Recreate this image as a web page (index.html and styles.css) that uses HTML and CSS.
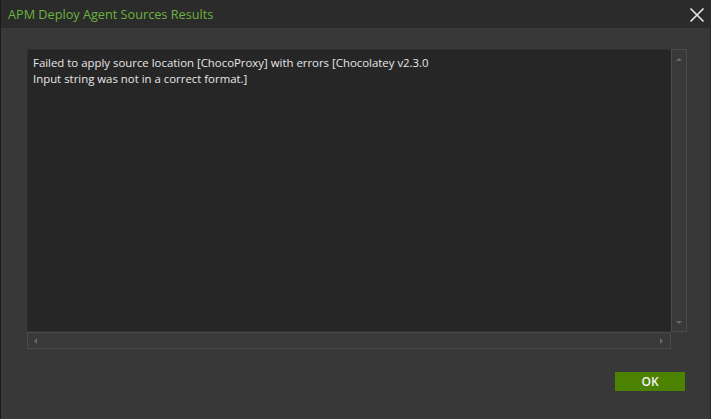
FILE: index.html
```html
<!DOCTYPE html>
<html lang="en">
<head>
    <meta charset="UTF-8">
    <title>APM Deploy Agent Sources Results</title>
    <link rel="stylesheet" href="styles.css">
</head>
<body>
    <div class="window">
        <div class="titlebar">
            <span class="title">APM Deploy Agent Sources Results</span>
            <svg class="close" width="16" height="16" viewBox="0 0 16 16">
                <path d="M1.5 1.5 L14.5 14.5 M14.5 1.5 L1.5 14.5" stroke="#e8e8e8" stroke-width="1.6" fill="none"/>
            </svg>
        </div>
        <div class="content">
            <div class="viewer">
                <div class="text">Failed to apply source location [ChocoProxy] with errors [Chocolatey v2.3.0<br>Input string was not in a correct format.]</div>
                <div class="vscroll">
                    <span class="arrow up"></span>
                    <span class="arrow down"></span>
                </div>
                <div class="hscroll">
                    <span class="arrow left"></span>
                    <span class="arrow right"></span>
                </div>
                <div class="corner"></div>
            </div>
            <div class="footer">
                <button class="ok">OK</button>
            </div>
        </div>
    </div>
</body>
</html>
```

FILE: styles.css
```css
html, body {
    margin: 0;
    padding: 0;
    background: #383838;
}
.window {
    width: 711px;
    height: 419px;
    box-sizing: border-box;
    border-left: 1px solid #1b1b1b;
    border-right: 1px solid #2a2a2a;
    display: flex;
    flex-direction: column;
    font-family: "Open Sans", "Noto Sans", sans-serif;
}
.titlebar {
    height: 28px;
    background: #2b2b2b;
    display: flex;
    align-items: center;
    justify-content: space-between;
    padding: 0 5px 0 7px;
}
.title {
    color: #6cb33f;
    font-size: 12.7px;
    padding-bottom: 1px;
}
.close {
    display: block;
    margin-top: 2px;
}
.content {
    flex: 1;
    padding: 21px 23px 0 26px;
}
.viewer {
    display: grid;
    grid-template-columns: 1fr 16px;
    grid-template-rows: 283px 17px;
}
.text {
    background: #262626;
    color: #e6e6e6;
    font-size: 11.4px;
    line-height: 16px;
    padding: 5px 5px;
    border: 1px solid #2e2e2e;
    border-right: none;
}
.vscroll, .hscroll {
    border: 1px solid #4b4b4b;
    background: #393939;
    display: flex;
    justify-content: space-between;
    align-items: center;
}
.vscroll {
    flex-direction: column;
    padding: 8px 0 7px;
}
.hscroll {
    padding: 0 7px 0 6px;
}
.corner {
    background: #383838;
}
.arrow {
    width: 0;
    height: 0;
    border: 3px solid transparent;
}
.arrow.up { border-bottom-color: #6a6a6a; border-top-width: 0; }
.arrow.down { border-top-color: #6a6a6a; border-bottom-width: 0; }
.arrow.left { border-right-color: #6a6a6a; border-left-width: 0; }
.arrow.right { border-left-color: #6a6a6a; border-right-width: 0; }
.footer {
    display: flex;
    justify-content: flex-end;
    padding: 23px 2px 0 0;
}
.ok {
    width: 70px;
    height: 19px;
    background: #4b8200;
    color: #f4f4f4;
    border: none;
    font-family: "Open Sans", "Noto Sans", sans-serif;
    font-size: 12px;
    font-weight: 600;
    padding: 0;
}
```
